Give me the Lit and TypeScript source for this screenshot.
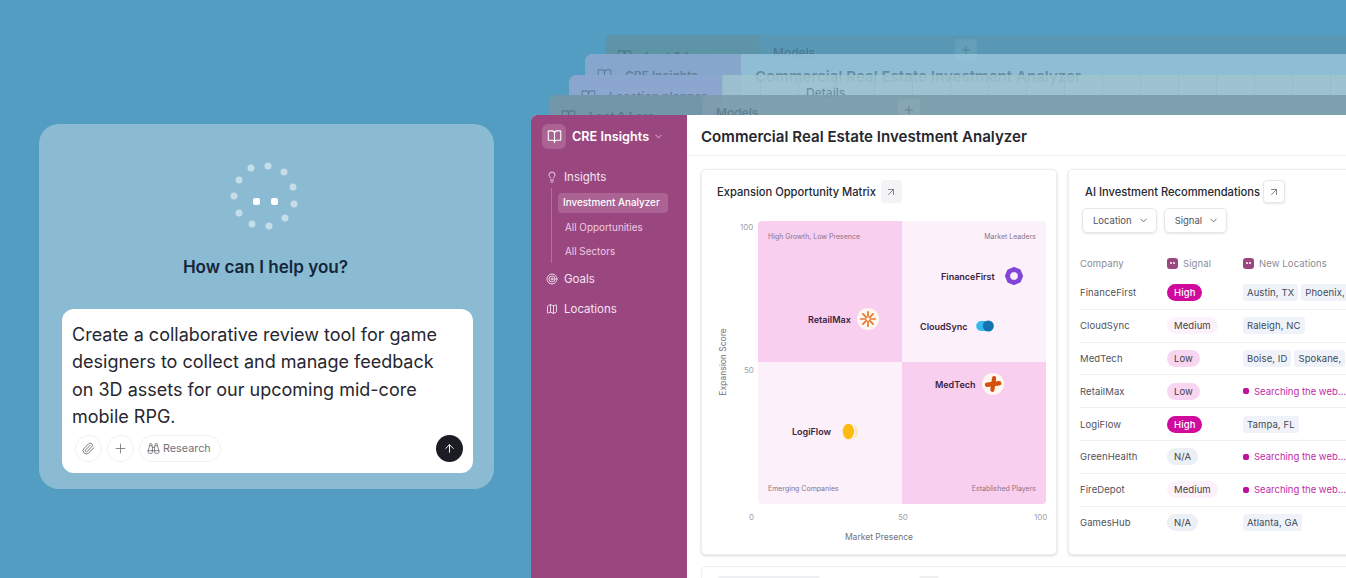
import { LitElement, css, html, svg } from "lit";
import { customElement } from "lit/decorators.js";

const icon = (body: unknown, size = 14, width = 1.75) => html`<svg
  width=${size}
  height=${size}
  viewBox="0 0 24 24"
  fill="none"
  stroke="currentColor"
  stroke-width=${width}
  stroke-linecap="round"
  stroke-linejoin="round"
>${body}</svg>`;

const bookIcon = svg`<path d="M12 7v14"/><path d="M3 18a1 1 0 0 1-1-1V4a1 1 0 0 1 1-1h5a4 4 0 0 1 4 4 4 4 0 0 1 4-4h5a1 1 0 0 1 1 1v13a1 1 0 0 1-1 1h-6a3 3 0 0 0-3 3 3 3 0 0 0-3-3z"/>`;
const bulbIcon = svg`<path d="M15 14c.2-1 .7-1.7 1.5-2.5 1-.9 1.5-2.2 1.5-3.5A6 6 0 0 0 6 8c0 1 .2 2.2 1.5 3.5.7.7 1.3 1.5 1.5 2.5"/><path d="M9 18h6"/><path d="M10 22h4"/>`;
const targetIcon = svg`<circle cx="12" cy="12" r="10"/><circle cx="12" cy="12" r="6"/><circle cx="12" cy="12" r="2"/>`;
const mapIcon = svg`<path d="M14.106 5.553a2 2 0 0 0 1.788 0l3.659-1.83A1 1 0 0 1 21 4.619v12.764a1 1 0 0 1-.553.894l-4.553 2.277a2 2 0 0 1-1.788 0l-4.212-2.106a2 2 0 0 0-1.788 0l-3.659 1.83A1 1 0 0 1 3 19.381V6.618a1 1 0 0 1 .553-.894l4.553-2.277a2 2 0 0 1 1.788 0z"/><path d="M15 5.764v15"/><path d="M9 3.236v15"/>`;
const clipIcon = svg`<path d="m21.44 11.05-9.19 9.19a6 6 0 0 1-8.49-8.49l8.57-8.57A4 4 0 1 1 18 8.84l-8.59 8.57a2 2 0 0 1-2.83-2.83l8.49-8.48"/>`;
const plusIcon = svg`<path d="M5 12h14"/><path d="M12 5v14"/>`;
const binocularsIcon = svg`<path d="M10 10h4"/><path d="M19 7V4a1 1 0 0 0-1-1h-2a1 1 0 0 0-1 1v3"/><path d="M20 21a2 2 0 0 0 2-2v-3.851c0-1.39-2-2.962-2-4.829V8a1 1 0 0 0-1-1h-4a1 1 0 0 0-1 1v11a2 2 0 0 0 2 2z"/><path d="M22 16H2"/><path d="M4 21a2 2 0 0 1-2-2v-3.851c0-1.39 2-2.962 2-4.829V8a1 1 0 0 1 1-1h4a1 1 0 0 1 1 1v11a2 2 0 0 1-2 2z"/><path d="M9 7V4a1 1 0 0 0-1-1H6a1 1 0 0 0-1 1v3"/>`;
const arrowUpIcon = svg`<path d="m5 12 7-7 7 7"/><path d="M12 19V5"/>`;
const arrowOutIcon = svg`<path d="M7 7h10v10"/><path d="M7 17 17 7"/>`;
const chevronIcon = svg`<path d="m6 9 6 6 6-6"/>`;

// Spinner dots, measured against the box around the ring
const ringDots = [
  [22, 8], [39, 6], [55, 12], [64, 27], [65, 44], [56, 58],
  [40, 66], [23, 64], [10, 53], [5, 36], [10, 20],
];

// Backgrounds are see-through: the names of the window behind show through
const ghosts = [
  { left: 605, top: 35, side: 154, sideBg: "rgba(94,147,168,.95)", mainBg: "rgba(90,152,179,.95)", name: "Loot & Lore", tab: "Models", plus: true },
  { left: 585, top: 54, side: 156, sideBg: "rgba(131,159,200,.75)", mainBg: "rgba(160,203,225,.75)", name: "CRE Insights", title: "Commercial Real Estate Investment Analyzer" },
  { left: 569, top: 75, side: 153, sideBg: "rgba(135,160,206,.78)", mainBg: "rgba(160,196,208,.82)", name: "Location planner", tab: "Details", lines: true },
  { left: 549, top: 95, side: 153, sideBg: "rgba(111,150,168,.8)", mainBg: "rgba(123,156,171,.9)", name: "Loot & Lore", tab: "Models", plus: true },
];

const points = [
  { name: "FinanceFirst", x: 183, y: 44, logo: "finance", size: 20, gap: 8 },
  { name: "RetailMax", x: 50, y: 87, logo: "retail", size: 18, gap: 6 },
  { name: "CloudSync", x: 162, y: 94, logo: "cloud", size: 22, gap: 6 },
  { name: "MedTech", x: 177, y: 152, logo: "med", size: 18, gap: 6 },
  { name: "LogiFlow", x: 34, y: 199, logo: "logi", size: 21, gap: 8 },
];

const rows = [
  { company: "FinanceFirst", signal: "High", places: ["Austin, TX", "Phoenix, AZ"] },
  { company: "CloudSync", signal: "Medium", places: ["Raleigh, NC"] },
  { company: "MedTech", signal: "Low", places: ["Boise, ID", "Spokane,"], trailing: true },
  { company: "RetailMax", signal: "Low", places: [] },
  { company: "LogiFlow", signal: "High", places: ["Tampa, FL"] },
  { company: "GreenHealth", signal: "N/A", places: [] },
  { company: "FireDepot", signal: "Medium", places: [] },
  { company: "GamesHub", signal: "N/A", places: ["Atlanta, GA"] },
];

const logos: Record<string, unknown> = {
  finance: svg`<path d="M7 2.500h6l4.500 4.500v6L13 17.500H7L2.500 13V7z" transform="rotate(22.5 10 10)" fill="#8245d8" stroke="#8245d8" stroke-linejoin="round" stroke-width="2"/><path d="M8.300 6.300h3.400l2 2v3.400l-2 2H8.300l-2-2V8.300z" fill="#fbeffa"/>`,
  retail: svg`<g stroke="#e8772e" stroke-width="1.900" stroke-linecap="round"><path d="M10 2v5.400M10 12.600V18M2 10h5.400M12.600 10H18M4.300 4.300l3.800 3.800M11.900 11.900l3.800 3.800M15.700 4.300l-3.800 3.800M8.100 11.900l-3.800 3.800"/></g>`,
  cloud: svg`<rect x="2" y="5.500" width="15" height="9" rx="4.500" fill="#35b9ee"/><circle cx="13" cy="10" r="5" fill="#1273ae"/>`,
  med: svg`<g stroke="#d4500f" stroke-linecap="round"><path d="M3.500 10.800 16.800 9.200" stroke-width="5.200"/><path d="M11.200 3.500 9.300 16.500" stroke-width="4.600"/></g>`,
  logi: svg`<path d="M13 3c2.700 1.400 3.800 4.100 3.800 7s-1.100 5.600-3.800 7c1-1.900 1.500-4.300 1.500-7s-.5-5.100-1.500-7z" fill="#fde7a8"/><ellipse cx="8" cy="10" rx="5.400" ry="7.400" fill="#fdbb10"/>`,
};

@customElement("app-root")
export class AppRoot extends LitElement {
  static styles = css`
    :host {
      display: block;
      position: relative;
      width: 1346px;
      height: 578px;
      overflow: hidden;
      background: #529dc1;
      color: #1e293b;
      font-family: Inter, "Liberation Sans", sans-serif;
    }

    svg { display: block; flex: none; }

    .stage { padding: 124px 0 0 39px; }

    /* Prompt card */
    .prompt {
      box-sizing: border-box;
      width: 455px;
      height: 365px;
      padding: 36px 21px 16px 23px;
      border-radius: 20px;
      background: #8bbbd3;
      display: flex;
      flex-direction: column;
      align-items: center;
    }
    .ring { margin-right: 7px; }
    .ask {
      margin: 23px 4px 30px 0;
      font-size: 17.100px;
      line-height: 24px;
      font-weight: 600;
      color: #13263a;
    }
    .composer {
      box-sizing: border-box;
      width: 411px;
      height: 164px;
      padding: 12px 10px 11px 10px;
      border-radius: 12px;
      background: #fff;
      display: flex;
      flex-direction: column;
      justify-content: space-between;
    }
    .composer p {
      margin: 0;
      max-width: 380px;
      font-size: 18px;
      line-height: 27.400px;
      color: #27272f;
    }
    .tools { display: flex; align-items: center; gap: 5px; padding-left: 3px; }
    .tool {
      box-sizing: border-box;
      height: 27px;
      min-width: 27px;
      border: 1px solid #f0f1f3;
      border-radius: 14px;
      display: flex;
      align-items: center;
      justify-content: center;
      gap: 3px;
      color: #71717a;
      font-size: 10.800px;
    }
    .tool.wide { padding: 0 9px 0 7px; }
    .send {
      margin-left: auto;
      width: 27px;
      height: 27px;
      border-radius: 50%;
      background: #1c1d24;
      color: #fff;
      display: flex;
      align-items: center;
      justify-content: center;
    }

    /* Stacked windows behind the main one */
    .ghost {
      position: absolute;
      width: 1000px;
      height: 300px;
      display: flex;
      border-radius: 8px 0 0 0;
      overflow: hidden;
      color: rgba(60, 90, 110, 0.5);
      font-size: 12px;
    }
    .ghost-side {
      flex: none;
      box-sizing: border-box;
      padding: 14px 0 0 12px;
      font-weight: 600;
      white-space: nowrap;
      display: flex;
      align-items: flex-start;
      gap: 13px;
    }
    .ghost-main { flex: 1; position: relative; padding: 10px 14px; }
    .ghost-tab { display: flex; align-items: flex-start; font-weight: 500; }
    .ghost-title { font-size: 15.100px; font-weight: 600; margin-top: 3px; }
    .ghost-plus {
      margin-left: 140px;
      margin-top: -6px;
      width: 22px;
      height: 22px;
      border-radius: 4px;
      background: rgba(255, 255, 255, 0.07);
      display: flex;
      align-items: center;
      justify-content: center;
    }
    .ghost-main.lines {
      background-image: linear-gradient(90deg, rgba(80, 120, 140, 0.09) 1px, transparent 1px);
      background-size: 38px 100%;
      padding-left: 84px;
    }

    /* Main window */
    .window {
      position: absolute;
      left: 531px;
      top: 115px;
      width: 1000px;
      height: 520px;
      display: flex;
      background: #fff;
      border-radius: 6px 0 0 0;
      overflow: hidden;
    }
    .side {
      flex: none;
      box-sizing: border-box;
      width: 156px;
      padding: 9px 11px;
      background: #9a4780;
      color: #f6e4f0;
      font-size: 11.500px;
    }
    .brand { display: flex; align-items: center; gap: 6px; height: 24px; color: #fff; font-size: 12.700px; font-weight: 600; }
    .brand-mark {
      width: 24px;
      height: 25px;
      border-radius: 6px;
      background: #ab6393;
      display: flex;
      align-items: center;
      justify-content: center;
    }
    .brand-chev { margin-left: -2px; opacity: 0.8; }
    .nav-item { display: flex; align-items: center; gap: 6px; height: 20px; padding-left: 4px; }
    .nav-item.first { margin-top: 19px; }
    .nav-item.goals { margin-top: 6px; }
    .nav-item.spaced { margin-top: 10px; }
    .subnav {
      box-sizing: border-box;
      height: 75px;
      margin: 1px 8px 0 9px;
      padding: 5px 0 0 6px;
      border-left: 1px solid #b272a0;
      display: flex;
      flex-direction: column;
      gap: 5px;
      font-size: 9.900px;
    }
    .subnav span { display: block; height: 19.500px; line-height: 19.500px; padding-left: 7px; color: #eeccE3; }
    .subnav .on { background: #ab6393; color: #fff; border-radius: 4px; font-weight: 500; padding-left: 5px; }

    .content { flex: 1; min-width: 0; }
    .topbar {
      box-sizing: border-box;
      height: 41px;
      padding: 3px 14px 0;
      display: flex;
      align-items: center;
      border-bottom: 1px solid #f1f1f4;
      font-size: 15.100px;
      font-weight: 600;
      color: #27272f;
    }
    .grid {
      display: grid;
      grid-template-columns: 356px 1fr;
      gap: 11px;
      padding: 13px 0 0 14px;
    }
    .card {
      box-sizing: border-box;
      height: 386px;
      background: #fff;
      border-radius: 5px;
      border: 1px solid #eceef1;
      box-shadow: 0 1px 3px rgba(0, 0, 0, 0.16);
    }
    .card-head {
      display: flex;
      align-items: center;
      gap: 5px;
      font-size: 11.150px;
      font-weight: 500;
      color: #27272f;
      height: 23px;
    }
    .arrow {
      box-sizing: border-box;
      width: 21px;
      height: 23px;
      border-radius: 4px;
      display: flex;
      align-items: center;
      justify-content: center;
      color: #71717a;
    }
    .arrow.soft { background: #f4f4f6; }
    .arrow.line { width: 22px; background: #fff; border: 1px solid #e5e7eb; box-shadow: 0 1px 2px rgba(0, 0, 0, 0.1); }

    /* Matrix */
    .matrix-card { padding: 10px 10px 0 15px; }
    .plot {
      position: relative;
      margin: 18px 0 0 41px;
      width: 288px;
      height: 283px;
      display: grid;
      grid-template-columns: 144px 144px;
      grid-template-rows: 141px 142px;
      font-size: 7px;
      color: #8a7388;
    }
    .quad { display: flex; padding: 11px 10px; }
    .quad.hot { background: #f9cfef; }
    .quad.cool { background: #fcf0fa; }
    .quad.tl { border-top-left-radius: 4px; }
    .quad.tr { justify-content: flex-end; border-top-right-radius: 4px; }
    .quad.bl { align-items: flex-end; border-bottom-left-radius: 4px; }
    .quad.br { align-items: flex-end; justify-content: flex-end; border-bottom-right-radius: 4px; }
    .tick { position: absolute; font-size: 8px; color: #a1a1aa; line-height: 10px; }
    .axis-x { position: absolute; left: -46px; right: 0; top: 311px; text-align: center; font-size: 8.500px; color: #71717a; }
    .axis-y {
      position: absolute;
      left: -70px;
      top: 136px;
      width: 70px;
      text-align: center;
      transform: rotate(-90deg);
      font-size: 8.500px;
      color: #71717a;
    }
    .point {
      position: absolute;
      display: flex;
      align-items: center;
      font-size: 9px;
      font-weight: 600;
      color: #3a2440;
      white-space: nowrap;
      transform: translateY(-50%);
    }
    .logo {
      width: 22px;
      height: 22px;
      border-radius: 50%;
      display: flex;
      align-items: center;
      justify-content: center;
    }
    .logo.filled { background: #fef6ef; }

    /* Table */
    .table-card { padding: 10px 0 0 11px; }
    .table-card .card-head { padding-left: 5px; gap: 3px; }
    .filters { display: flex; gap: 7px; margin: 5px 0 0 2px; }
    .filter {
      box-sizing: border-box;
      height: 25px;
      padding: 0 7px 0 10px;
      display: flex;
      align-items: center;
      gap: 6px;
      border: 1px solid #e5e7eb;
      border-radius: 5px;
      box-shadow: 0 1px 2px rgba(0, 0, 0, 0.1);
      font-size: 9.500px;
      color: #52525b;
    }
    table { border-collapse: collapse; table-layout: fixed; width: 440px; margin-top: 16px; font-size: 9.500px; letter-spacing: 0.1px; color: #52525b; }
    th { font-weight: 400; color: #8b8b94; text-align: left; height: 28px; padding: 0; }
    td { height: 31.800px; padding: 0; white-space: nowrap; overflow: hidden; }
    tr { border-bottom: 1px solid #eff0f3; }
    tr:last-child { border-bottom: 0; }
    .th-mark { display: flex; align-items: center; gap: 5px; }
    .spark {
      width: 11px;
      height: 11px;
      border-radius: 3px;
      background: #9a4780;
      display: flex;
      align-items: center;
      justify-content: center;
      gap: 1px;
    }
    .spark i { width: 2px; height: 2px; background: #fff; border-radius: 50%; }
    .pill {
      display: inline-block;
      height: 17px;
      line-height: 17px;
      padding: 0 7px;
      border-radius: 9px;
      color: #3f3f46;
    }
    .pill.High { background: #cf0a9c; color: #fff; font-weight: 500; }
    .pill.Medium { background: #fdf2fb; }
    .pill.Low { background: #f8d5f1; }
    .pill.NA { background: #eceff3; }
    .places { display: flex; align-items: center; gap: 3px; }
    .place { height: 17px; line-height: 17px; padding: 0 4px; background: #eff3f9; border-radius: 3px; color: #3f4a5a; }
    .search { display: flex; align-items: center; gap: 5px; color: #c02ba4; letter-spacing: 0; }
    .search i { width: 6px; height: 6px; border-radius: 2px; background: #c0109a; }
    .trail { width: 5px; height: 6px; border-radius: 1px; background: #c0109a; margin-left: -2px; }

    .lower {
      margin: 11px 0 0 14px;
      height: 40px;
      border: 1px solid #eceef1;
      border-radius: 5px;
      padding: 9px 16px;
      display: flex;
      gap: 99px;
    }
    .stub { height: 10px; background: #eeeff1; border-radius: 3px; }
  `;

  private renderGhost(g: (typeof ghosts)[number]) {
    return html`<div class="ghost" style="left:${g.left}px;top:${g.top}px;background:${g.mainBg}">
      <div class="ghost-side" style="width:${g.side}px;background:${g.sideBg}">
        ${icon(bookIcon, 15)} ${g.name}
      </div>
      <div class="ghost-main ${g.lines ? "lines" : ""}">
        ${g.title
          ? html`<div class="ghost-title">${g.title}</div>`
          : html`<div class="ghost-tab">
              ${g.tab}${g.plus ? html`<div class="ghost-plus">${icon(plusIcon, 12)}</div>` : ""}
            </div>`}
      </div>
    </div>`;
  }

  private renderMatrix() {
    return html`<div class="card matrix-card">
      <div class="card-head">
        Expansion Opportunity Matrix
        <span class="arrow soft">${icon(arrowOutIcon, 12)}</span>
      </div>
      <div class="plot">
        <div class="quad hot tl">High Growth, Low Presence</div>
        <div class="quad cool tr">Market Leaders</div>
        <div class="quad cool bl">Emerging Companies</div>
        <div class="quad hot br">Established Players</div>
        <span class="tick" style="left:-18px;top:1px">100</span>
        <span class="tick" style="left:-14px;top:144px">50</span>
        <span class="tick" style="left:-9px;top:291px">0</span>
        <span class="tick" style="left:140px;top:291px">50</span>
        <span class="tick" style="left:276px;top:291px">100</span>
        <div class="axis-x">Market Presence</div>
        <div class="axis-y">Expansion Score</div>
        ${points.map(
          (p) => html`<div class="point" style="left:${p.x}px;top:${p.y + 11}px;gap:${p.gap}px">
            ${p.name}
            <span class="logo ${p.logo === "retail" || p.logo === "med" ? "filled" : ""}">
              <svg width=${p.size} height=${p.size} viewBox="0 0 20 20">${logos[p.logo]}</svg>
            </span>
          </div>`
        )}
      </div>
    </div>`;
  }

  private renderTable() {
    return html`<div class="card table-card">
      <div class="card-head">
        AI Investment Recommendations
        <span class="arrow line">${icon(arrowOutIcon, 12)}</span>
      </div>
      <div class="filters">
        <div class="filter">Location ${icon(chevronIcon, 11)}</div>
        <div class="filter">Signal ${icon(chevronIcon, 11)}</div>
      </div>
      <table>
        <colgroup><col style="width:87px" /><col style="width:76px" /><col /></colgroup>
        <thead>
          <tr>
            <th>Company</th>
            <th><span class="th-mark"><span class="spark"><i></i><i></i></span>Signal</span></th>
            <th><span class="th-mark"><span class="spark"><i></i><i></i></span>New Locations</span></th>
          </tr>
        </thead>
        <tbody>
          ${rows.map(
            (r) => html`<tr>
              <td>${r.company}</td>
              <td><span class="pill ${r.signal.replace("/", "")}">${r.signal}</span></td>
              <td>
                ${r.places.length
                  ? html`<div class="places">
                      ${r.places.map((p) => html`<span class="place">${p}</span>`)}
                      ${r.trailing ? html`<i class="trail"></i>` : ""}
                    </div>`
                  : html`<div class="search"><i></i>Searching the web...</div>`}
              </td>
            </tr>`
          )}
        </tbody>
      </table>
    </div>`;
  }

  render() {
    return html`
      <div class="stage">
        <section class="prompt">
          <svg class="ring" width="70" height="72" viewBox="0 0 70 72">
            ${ringDots.map(([x, y]) => svg`<circle cx=${x} cy=${y} r="3.500" fill="#c6dde9" />`)}
            <rect x="24" y="38" width="7" height="7" rx="2" fill="#fff" />
            <rect x="42" y="38" width="7" height="7" rx="2" fill="#fff" />
          </svg>
          <div class="ask">How can I help you?</div>
          <div class="composer">
            <p>
              Create a collaborative review tool for game designers to collect and manage feedback on 3D
              assets for our upcoming mid-core mobile RPG.
            </p>
            <div class="tools">
              <span class="tool">${icon(clipIcon, 13)}</span>
              <span class="tool">${icon(plusIcon, 15, 1.3)}</span>
              <span class="tool wide">${icon(binocularsIcon, 13, 1.6)} Research</span>
              <span class="send">${icon(arrowUpIcon, 13)}</span>
            </div>
          </div>
        </section>
      </div>

      ${ghosts.map((g) => this.renderGhost(g))}

      <div class="window">
        <aside class="side">
          <div class="brand">
            <span class="brand-mark">${icon(bookIcon, 15)}</span>
            CRE Insights
            <span class="brand-chev">${icon(chevronIcon, 11)}</span>
          </div>
          <div class="nav-item first">${icon(bulbIcon, 12)} Insights</div>
          <div class="subnav">
            <span class="on">Investment Analyzer</span>
            <span>All Opportunities</span>
            <span>All Sectors</span>
          </div>
          <div class="nav-item goals">${icon(targetIcon, 12)} Goals</div>
          <div class="nav-item spaced">${icon(mapIcon, 12)} Locations</div>
        </aside>
        <main class="content">
          <div class="topbar">Commercial Real Estate Investment Analyzer</div>
          <div class="grid">${this.renderMatrix()} ${this.renderTable()}</div>
          <div class="lower">
            <div class="stub" style="width:102px"></div>
            <div class="stub" style="width:20px"></div>
          </div>
        </main>
      </div>
    `;
  }
}
